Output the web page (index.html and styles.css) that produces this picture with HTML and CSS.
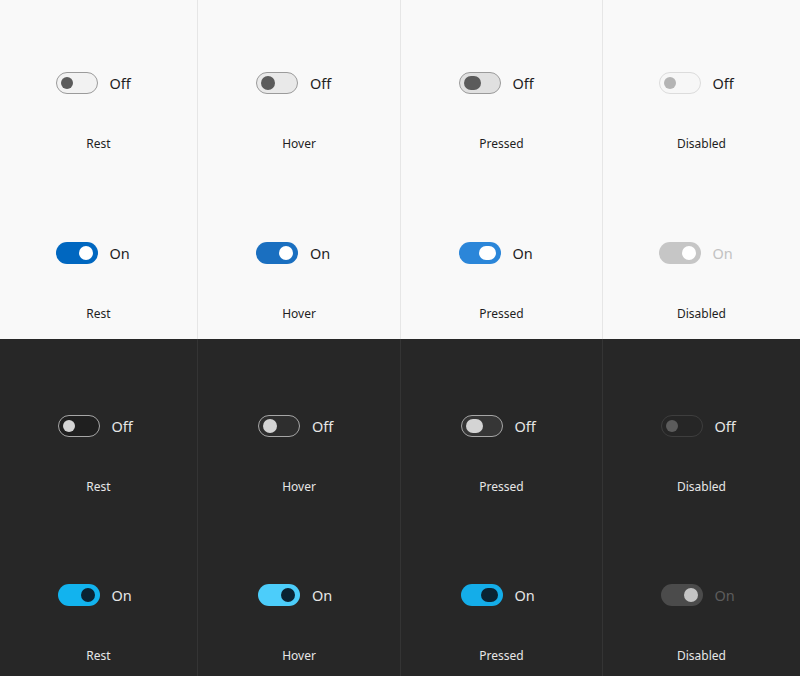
FILE: index.html
```html
<!DOCTYPE html>
<html lang="en">
<head>
    <meta charset="UTF-8">
    <title>Toggle switch states</title>
    <link rel="stylesheet" href="styles.css">
</head>
<body>
    <div class="panel light">
        <div class="cell">
            <div class="switch-row"><span class="track off rest"><span class="thumb"></span></span><span class="state">Off</span></div>
            <div class="caption">Rest</div>
        </div>
        <div class="cell">
            <div class="switch-row"><span class="track off hover"><span class="thumb"></span></span><span class="state">Off</span></div>
            <div class="caption">Hover</div>
        </div>
        <div class="cell">
            <div class="switch-row"><span class="track off pressed"><span class="thumb"></span></span><span class="state">Off</span></div>
            <div class="caption">Pressed</div>
        </div>
        <div class="cell">
            <div class="switch-row"><span class="track off disabled"><span class="thumb"></span></span><span class="state">Off</span></div>
            <div class="caption">Disabled</div>
        </div>
        <div class="cell">
            <div class="switch-row"><span class="track on rest"><span class="thumb"></span></span><span class="state">On</span></div>
            <div class="caption">Rest</div>
        </div>
        <div class="cell">
            <div class="switch-row"><span class="track on hover"><span class="thumb"></span></span><span class="state">On</span></div>
            <div class="caption">Hover</div>
        </div>
        <div class="cell">
            <div class="switch-row"><span class="track on pressed"><span class="thumb"></span></span><span class="state">On</span></div>
            <div class="caption">Pressed</div>
        </div>
        <div class="cell">
            <div class="switch-row"><span class="track on disabled"><span class="thumb"></span></span><span class="state muted">On</span></div>
            <div class="caption">Disabled</div>
        </div>
    </div>

    <div class="panel dark">
        <div class="cell">
            <div class="switch-row"><span class="track off rest"><span class="thumb"></span></span><span class="state">Off</span></div>
            <div class="caption">Rest</div>
        </div>
        <div class="cell">
            <div class="switch-row"><span class="track off hover"><span class="thumb"></span></span><span class="state">Off</span></div>
            <div class="caption">Hover</div>
        </div>
        <div class="cell">
            <div class="switch-row"><span class="track off pressed"><span class="thumb"></span></span><span class="state">Off</span></div>
            <div class="caption">Pressed</div>
        </div>
        <div class="cell">
            <div class="switch-row"><span class="track off disabled"><span class="thumb"></span></span><span class="state">Off</span></div>
            <div class="caption">Disabled</div>
        </div>
        <div class="cell">
            <div class="switch-row"><span class="track on rest"><span class="thumb"></span></span><span class="state">On</span></div>
            <div class="caption">Rest</div>
        </div>
        <div class="cell">
            <div class="switch-row"><span class="track on hover"><span class="thumb"></span></span><span class="state">On</span></div>
            <div class="caption">Hover</div>
        </div>
        <div class="cell">
            <div class="switch-row"><span class="track on pressed"><span class="thumb"></span></span><span class="state">On</span></div>
            <div class="caption">Pressed</div>
        </div>
        <div class="cell">
            <div class="switch-row"><span class="track on disabled"><span class="thumb"></span></span><span class="state muted">On</span></div>
            <div class="caption">Disabled</div>
        </div>
    </div>
</body>
</html>
```

FILE: styles.css
```css
body {
    margin: 0;
    font-family: "Noto Sans", "Open Sans", sans-serif;
}
.panel {
    display: grid;
    grid-template-columns: 197px 203px 202px 198px;
    grid-template-rows: 1fr 1fr;
}
.light {
    height: 339px;
    background-color: #f9f9f9;
    color: #1f1f1f;
}
.dark {
    height: 337px;
    background-color: #272727;
    color: #e6e6e6;
}
.cell {
    display: flex;
    flex-direction: column;
    align-items: center;
    padding-top: 72px;
    border-left: 1px solid #e6e6e6;
}
.dark .cell {
    padding-top: 76px;
    border-left-color: #343434;
}
.cell:nth-child(4n+1) {
    border-left: none;
}
.switch-row {
    display: flex;
    align-items: center;
    gap: 12px;
    margin-right: 10px;
}
.dark .switch-row {
    margin-right: 6px;
}
.state {
    font-size: 14.5px;
    line-height: 22px;
    min-width: 22px;
}
.caption {
    margin-top: 42px;
    font-size: 12px;
    line-height: 16px;
}
.track {
    box-sizing: border-box;
    width: 42px;
    height: 22px;
    border-radius: 11px;
    border: 1px solid #9b9b9b;
    display: flex;
    align-items: center;
    padding: 0 4px;
}
.track.on {
    justify-content: flex-end;
    border: none;
    padding: 0 5px;
}
.thumb {
    width: 12px;
    height: 12px;
    border-radius: 7px;
    background-color: #5b5b5b;
}
.track.hover .thumb {
    width: 14px;
    height: 14px;
}
.track.pressed .thumb {
    width: 17px;
    height: 14px;
}

/* light theme */
.light .track.off.rest { background-color: #f2f2f2; }
.light .track.off.hover { background-color: #e9e9e9; }
.light .track.off.pressed { background-color: #e0e0e0; }
.light .track.off.disabled { border-color: #dcdcdc; background-color: #f7f7f7; }
.light .track.off.disabled .thumb { background-color: #b4b4b4; }
.light .track.on .thumb { background-color: #ffffff; width: 14px; height: 14px; }
.light .track.on.pressed .thumb { width: 17px; }
.light .track.on.rest { background-color: #0067c0; }
.light .track.on.hover { background-color: #1a6fc0; }
.light .track.on.pressed { background-color: #2b86d9; }
.light .track.on.disabled { background-color: #c6c6c6; }
.light .muted { color: #c2c2c2; }

/* dark theme */
.dark .track.off { border-color: #a6a6a6; }
.dark .track.off .thumb { background-color: #d4d4d4; }
.dark .track.off.rest { background-color: #1f1f1f; }
.dark .track.off.hover { background-color: #2e2e2e; }
.dark .track.off.pressed { background-color: #363636; }
.dark .track.off.disabled { border-color: #3e3e3e; background-color: #262626; }
.dark .track.off.disabled .thumb { background-color: #5c5c5c; }
.dark .track.on .thumb { background-color: #0a2333; width: 14px; height: 14px; }
.dark .track.on.pressed .thumb { width: 17px; }
.dark .track.on.rest { background-color: #12b3ee; }
.dark .track.on.hover { background-color: #4ccdfa; }
.dark .track.on.pressed { background-color: #14ade9; }
.dark .track.on.disabled { background-color: #4b4b4b; }
.dark .track.on.disabled .thumb { background-color: #c4c4c4; }
.dark .muted { color: #5d5d5d; }
```
